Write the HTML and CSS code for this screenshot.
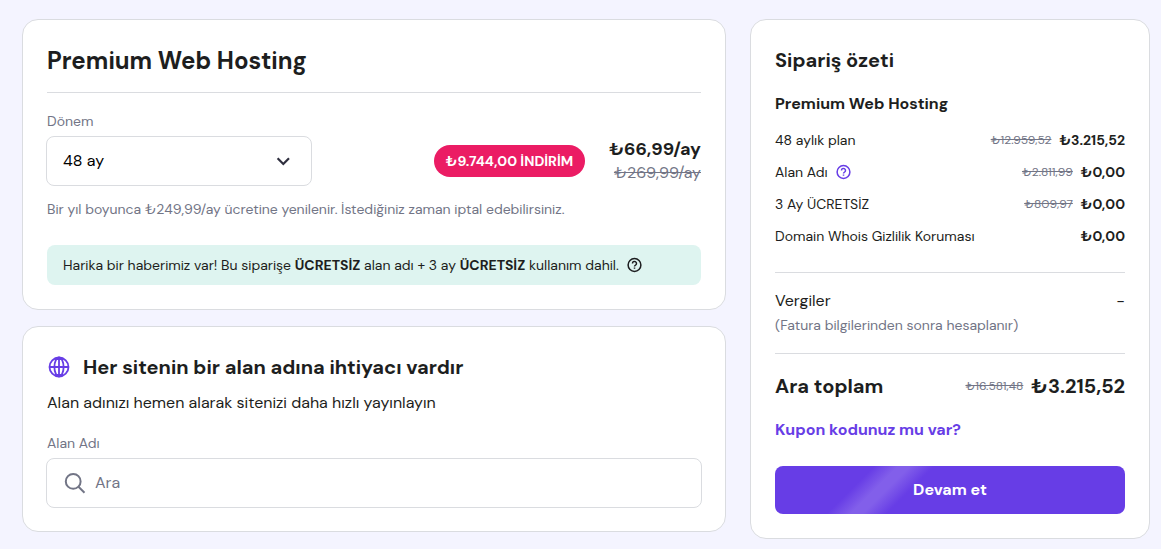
FILE: index.html
```html
<!DOCTYPE html>
<html lang="tr">
<head>
<meta charset="utf-8">
<meta name="viewport" content="width=device-width, initial-scale=1">
<title>Premium Web Hosting</title>
<link rel="stylesheet" href="styles.css">
</head>
<body>
<main class="checkout">
  <div class="main-column">
    <section class="card">
      <h1 class="plan-title">Premium Web Hosting</h1>
      <div class="period-row">
        <div class="period-field">
          <label class="field-label" for="period">Dönem</label>
          <div class="select-box">
            <select id="period" class="select">
              <option>48 ay</option>
            </select>
            <svg class="select-arrow" viewBox="0 0 24 24" width="24" height="24" aria-hidden="true"><path d="M5.600 9.300 11.300 15l5.700-5.700" fill="none" stroke="#2f2f3f" stroke-width="2.200"/></svg>
          </div>
        </div>
        <div class="offer">
          <span class="discount">₺9.744,00 İNDİRİM</span>
          <div class="prices">
            <strong class="price-now">₺66,99/ay</strong>
            <s class="price-was">₺269,99/ay</s>
          </div>
        </div>
      </div>
      <p class="renewal">Bir yıl boyunca ₺249,99/ay ücretine yenilenir. İstediğiniz zaman iptal edebilirsiniz.</p>
      <div class="notice">
        <p class="notice-text">Harika bir haberimiz var! Bu siparişe <strong>ÜCRETSİZ</strong> alan adı + 3 ay <strong>ÜCRETSİZ</strong> kullanım dahil.</p>
        <svg class="icon-help" viewBox="0 0 16 16" width="16" height="16" aria-hidden="true"><circle cx="7.500" cy="8" r="6.400"/><path d="M5.500 6.500a2 2 0 1 1 3.200 1.500C7.900 8.600 7.500 8.900 7.500 9.500M7.500 10.500v1.300"/></svg>
      </div>
    </section>

    <section class="card">
      <h2 class="domain-title">
        <svg class="icon-globe" viewBox="0 0 24 24" width="24" height="24" aria-hidden="true"><circle cx="12" cy="12" r="9.500"/><ellipse cx="12" cy="12" rx="4.600" ry="9.500"/><path d="M12 2.500v19M2.500 12h19M8 4h8M8 20h8"/></svg>
        Her sitenin bir alan adına ihtiyacı vardır
      </h2>
      <p class="domain-text">Alan adınızı hemen alarak sitenizi daha hızlı yayınlayın</p>
      <label class="field-label" for="domain">Alan Adı</label>
      <div class="search-box">
        <svg class="icon-search" viewBox="0 0 24 24" width="24" height="24" aria-hidden="true"><circle cx="10.200" cy="10.400" r="7.400"/><path d="m15.500 15.700 6 6"/></svg>
        <input id="domain" class="search-input" type="text" placeholder="Ara">
      </div>
    </section>
  </div>

  <aside class="card summary">
    <h2 class="summary-title">Sipariş özeti</h2>
    <h3 class="summary-plan">Premium Web Hosting</h3>
    <ul class="lines">
      <li class="line"><span>48 aylık plan</span><span class="amounts"><s class="old">₺12.959,52</s><strong>₺3.215,52</strong></span></li>
      <li class="line"><span class="line-name">Alan Adı
        <svg class="icon-help accent" viewBox="0 0 16 16" width="16" height="16" aria-hidden="true"><circle cx="7.500" cy="8" r="6.400"/><path d="M5.500 6.500a2 2 0 1 1 3.200 1.500C7.900 8.600 7.500 8.900 7.500 9.500M7.500 10.500v1.300"/></svg>
      </span><span class="amounts"><s class="old">₺2.811,99</s><strong>₺0,00</strong></span></li>
      <li class="line"><span>3 Ay ÜCRETSİZ</span><span class="amounts"><s class="old">₺809,97</s><strong>₺0,00</strong></span></li>
      <li class="line"><span>Domain Whois Gizlilik Koruması</span><span class="amounts"><strong>₺0,00</strong></span></li>
    </ul>
    <div class="taxes">
      <div class="tax-line"><span>Vergiler</span><span>-</span></div>
      <p class="tax-note">(Fatura bilgilerinden sonra hesaplanır)</p>
    </div>
    <div class="subtotal">
      <span>Ara toplam</span>
      <span class="amounts"><s class="old">₺16.581,48</s><strong>₺3.215,52</strong></span>
    </div>
    <a class="coupon" href="#">Kupon kodunuz mu var?</a>
    <button class="continue" type="button">Devam et</button>
  </aside>
</main>
</body>
</html>
```

FILE: styles.css
```css
* { box-sizing: border-box; }

body {
  margin: 0;
  background: #f4f4ff;
  color: #1d1e20;
  font: 400 14px/24px "DM Sans", Inter, sans-serif;
}

h1, h2, h3, p, ul { margin: 0; padding: 0; }
strong, h1, h2, h3 { font-weight: 700; }

.checkout {
  display: grid;
  grid-template-columns: minmax(0, 1fr) 400px;
  align-items: start;
  gap: 24px;
  padding: 19px 11px 10px 22px;
}

.main-column { display: grid; gap: 16px; }

.card {
  padding: 24px;
  background: #fff;
  border: 1px solid #dadce0;
  border-radius: 16px;
}

.plan-title {
  padding-bottom: 14px;
  border-bottom: 1px solid #dadce0;
  font-size: 24px;
  line-height: 34px;
}

.field-label { display: block; color: #727586; }

.period-row {
  display: flex;
  align-items: flex-end;
  justify-content: space-between;
  padding-top: 16px;
}

.period-field { width: 264px; }

/* Field frames sit one pixel outside the text column */
.select-box { display: grid; align-items: center; margin: 3px -1px -1px; }

.select {
  grid-area: 1 / 1;
  width: 100%;
  height: 50px;
  padding: 0 16px;
  appearance: none;
  background: #fff;
  border: 1px solid #dadce0;
  border-radius: 8px;
  color: #000;
  font: inherit;
  font-size: 16px;
}

.select-arrow {
  grid-area: 1 / 1;
  justify-self: end;
  margin-right: 16px;
  pointer-events: none;
}

.offer { display: flex; align-items: center; gap: 24px; }

.discount {
  padding: 4px 12px;
  border-radius: 16px;
  background: #eb1c64;
  color: #fff;
  font-weight: 700;
}

.prices { display: grid; justify-items: end; }
.price-now { font-size: 18px; }
.price-was { color: #727586; font-size: 16px; }

.renewal { margin-top: 12px; color: #727586; }

.notice {
  display: flex;
  align-items: center;
  gap: 8px;
  margin-top: 24px;
  padding: 8px 16px;
  border-radius: 8px;
  background: #def4f0;
}

.icon-help {
  flex: none;
  fill: none;
  stroke: #1d1e20;
  stroke-width: 1.5;
}

.icon-help.accent { stroke: #673de6; }

.domain-title {
  display: flex;
  align-items: center;
  gap: 12px;
  font-size: 20px;
  line-height: 32px;
}

.icon-globe { fill: none; stroke: #673de6; stroke-width: 1.8; }

.domain-text { margin: 8px 0 16px; font-size: 16px; }

.search-box {
  display: flex;
  align-items: center;
  gap: 8px;
  height: 50px;
  margin: 3px -1px -1px;
  padding: 0 16px;
  border: 1px solid #dadce0;
  border-radius: 8px;
}

.icon-search { flex: none; fill: none; stroke: #727586; stroke-width: 2; }

.search-input {
  flex: 1;
  min-width: 0;
  padding: 0;
  border: 0;
  outline: 0;
  background: none;
  font: inherit;
  font-size: 16px;
}

.search-input::placeholder { color: #727586; }

.summary { display: flex; flex-direction: column; }
.summary-title { font-size: 20px; line-height: 32px; }
.summary-plan { margin-top: 16px; font-size: 16px; }

.lines {
  display: grid;
  gap: 8px;
  margin-top: 12px;
  padding-bottom: 24px;
  border-bottom: 1px solid #dadce0;
  list-style: none;
}

.line, .tax-line, .subtotal {
  display: flex;
  align-items: center;
  justify-content: space-between;
}

.line-name { display: flex; align-items: center; gap: 8px; }
.amounts { display: flex; align-items: center; gap: 8px; }
.old { color: #727586; font-size: 12px; font-weight: 400; }

.taxes { padding: 16px 0; border-bottom: 1px solid #dadce0; }
.tax-line { font-size: 16px; }
.tax-note { color: #727586; }

.subtotal {
  margin-top: 16px;
  font-size: 20px;
  font-weight: 700;
  line-height: 32px;
}

.coupon {
  align-self: flex-start;
  margin-top: 16px;
  color: #673de6;
  font-size: 16px;
  font-weight: 700;
  text-decoration: none;
}

.continue {
  height: 48px;
  margin-top: 24px;
  border: 0;
  border-radius: 8px;
  background: linear-gradient(135deg, #673de6 25%, #825fea 31%, #825fea 34%, #673de6 40%);
  color: #fff;
  font: inherit;
  font-size: 16px;
  font-weight: 700;
}
```
